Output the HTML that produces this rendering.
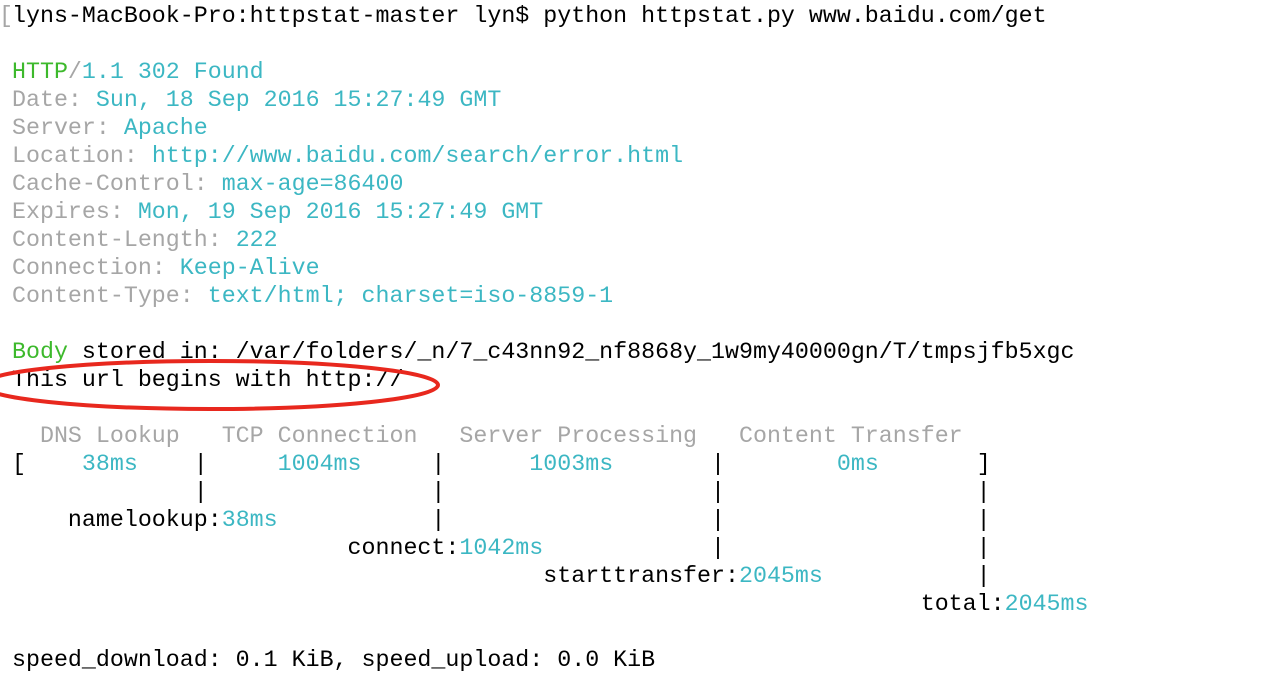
<!DOCTYPE html>
<html><head><meta charset="utf-8"><style>
html,body{margin:0;padding:0;background:#fff;width:1270px;height:676px;overflow:hidden;position:relative}
pre{margin:0;position:absolute;left:12px;top:2px;font-family:"Liberation Mono",monospace;font-size:23.3px;line-height:28px;color:#000}
.g{color:#a6a6a6}.c{color:#3cb7c3}.G{color:#3db92c}
svg{position:absolute;left:0;top:0}
.br{position:absolute;left:-1px;top:2px;font-family:"Liberation Mono",monospace;font-size:23.3px;line-height:28px;color:#a6a6a6}
</style></head><body>
<div class="br">[</div>
<pre>lyns-MacBook-Pro:httpstat-master lyn$ python httpstat.py www.baidu.com/get

<span class="G">HTTP</span><span class="g">/</span><span class="c">1.1 302 Found</span>
<span class="g">Date:</span> <span class="c">Sun, 18 Sep 2016 15:27:49 GMT</span>
<span class="g">Server:</span> <span class="c">Apache</span>
<span class="g">Location:</span> <span class="c">http://www.baidu.com/search/error.html</span>
<span class="g">Cache-Control:</span> <span class="c">max-age=86400</span>
<span class="g">Expires:</span> <span class="c">Mon, 19 Sep 2016 15:27:49 GMT</span>
<span class="g">Content-Length:</span> <span class="c">222</span>
<span class="g">Connection:</span> <span class="c">Keep-Alive</span>
<span class="g">Content-Type:</span> <span class="c">text/html; charset=iso-8859-1</span>

<span class="G">Body</span> stored in: /var/folders/_n/7_c43nn92_nf8868y_1w9my40000gn/T/tmpsjfb5xgc
This url begins with http://

<span class="g">  DNS Lookup   TCP Connection   Server Processing   Content Transfer</span>
[    <span class="c">38ms</span>    |     <span class="c">1004ms</span>     |      <span class="c">1003ms</span>       |        <span class="c">0ms</span>       ]
             |                |                   |                  |
    namelookup:<span class="c">38ms</span>           |                   |                  |
                        connect:<span class="c">1042ms</span>            |                  |
                                      starttransfer:<span class="c">2045ms</span>           |
                                                                 total:<span class="c">2045ms</span>

speed_download: 0.1 KiB, speed_upload: 0.0 KiB</pre>
<svg width="1270" height="676"><ellipse cx="210" cy="385" rx="228" ry="24" fill="none" stroke="#e8281e" stroke-width="4"/></svg>
</body></html>
